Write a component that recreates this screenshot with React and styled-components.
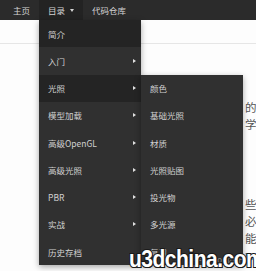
import React from 'react';
import styled, { createGlobalStyle } from 'styled-components';

const GlobalStyle = createGlobalStyle`
  body {
    margin: 0;
    background: #fdfdfd;
    font-family: "Noto Sans CJK SC", "Liberation Sans", sans-serif;
  }
`;

const Page = styled.div`
  position: relative;
  width: 256px;
  height: 271px;
  overflow: hidden;
  background: #fdfdfd;
`;

const NavBar = styled.nav`
  display: flex;
  height: 20px;
  padding-left: 4px;
  background: #2b2b2b;
`;

const NavItem = styled.div`
  position: relative;
  display: flex;
  align-items: center;
  gap: 4px;
  padding: 0 9px;
  font-size: 8.5px;
  color: #d4d4d4;
  background: ${(p) => (p.$active ? '#232323' : 'transparent')};
`;

const Caret = styled.span`
  width: 0;
  height: 0;
  border-left: 2.5px solid transparent;
  border-right: 2.5px solid transparent;
  border-top: 3px solid #d4d4d4;
  margin-left: 1px;
`;

const Header = styled.div`
  height: 23px;
  border-bottom: 1px solid #e6e6e6;
`;

const Article = styled.div`
  display: flex;
  flex-direction: column;
  padding-left: 245px;
  font-size: 11.5px;
  line-height: 17px;
  color: #555;
  white-space: nowrap;
`;

const Line = styled.div`
  margin-top: ${(p) => p.$gap || 0}px;
  color: ${(p) => (p.$link ? '#3b7fc4' : '#555')};
`;

const Menu = styled.div`
  position: absolute;
  top: 20px;
  left: 0;
  width: 102px;
  background: #303030;
  box-shadow: 0 2px 6px rgba(0, 0, 0, 0.35);
`;

const MenuItem = styled.div`
  position: relative;
  display: flex;
  align-items: center;
  justify-content: space-between;
  height: 27.25px;
  padding: 0 5px 0 9px;
  font-size: 8.5px;
  color: #d0d0d0;
  background: ${(p) => (p.$active ? '#242424' : 'transparent')};
  white-space: nowrap;
`;

const Arrow = styled.span`
  width: 0;
  height: 0;
  border-top: 2.5px solid transparent;
  border-bottom: 2.5px solid transparent;
  border-left: 3px solid #e0e0e0;
`;

const SubMenu = styled(Menu)`
  top: 0;
  left: 102px;
`;

const Watermark = styled.div`
  position: absolute;
  left: 129px;
  bottom: 1px;
  line-height: 1;
  font-family: "Liberation Sans", Arial, sans-serif;
  font-weight: 700;
  font-size: 21px;
  letter-spacing: -0.5px;
  color: #fff;
  -webkit-text-stroke: 2px #1a1a1a;
  paint-order: stroke fill;
  text-shadow: 1px 1px 0 #1a1a1a;
  transform: scaleY(1.12);
  transform-origin: bottom left;
  white-space: nowrap;
`;

const Credit = styled.div`
  position: absolute;
  left: 185px;
  top: 253px;
  font-size: 8.5px;
  color: rgba(190, 190, 190, 0.6);
  white-space: nowrap;
`;

const lighting = ['颜色', '基础光照', '材质', '光照贴图', '投光物', '多光源', '复习'];

const items = [
  { label: '简介', active: true },
  { label: '入门', sub: true },
  { label: '光照', sub: true, active: true, open: true },
  { label: '模型加载', sub: true },
  { label: '高级OpenGL', sub: true },
  { label: '高级光照', sub: true },
  { label: 'PBR', sub: true },
  { label: '实战', sub: true },
  { label: '历史存档' },
];

export default function App() {
  return (
    <Page>
      <GlobalStyle />
      <NavBar>
        <NavItem>主页</NavItem>
        <NavItem $active>
          目录<Caret />
          <Menu>
            {items.map((it) => (
              <MenuItem key={it.label} $active={it.active}>
                {it.label}
                {it.sub && <Arrow />}
                {it.open && (
                  <SubMenu>
                    {lighting.map((s) => (
                      <MenuItem key={s}>{s}</MenuItem>
                    ))}
                  </SubMenu>
                )}
              </MenuItem>
            ))}
          </Menu>
        </NavItem>
        <NavItem>代码仓库</NavItem>
      </NavBar>
      <Header />
      <Article>
        <Line $gap={55}>的工作</Line>
        <Line>学习</Line>
        <Line $gap={63}>些一</Line>
        <Line>必不</Line>
        <Line>能把</Line>
        <Line $link>www</Line>
      </Article>
      <Credit>知乎 @SongHHH</Credit>
      <Watermark>u3dchina.com</Watermark>
    </Page>
  );
}
